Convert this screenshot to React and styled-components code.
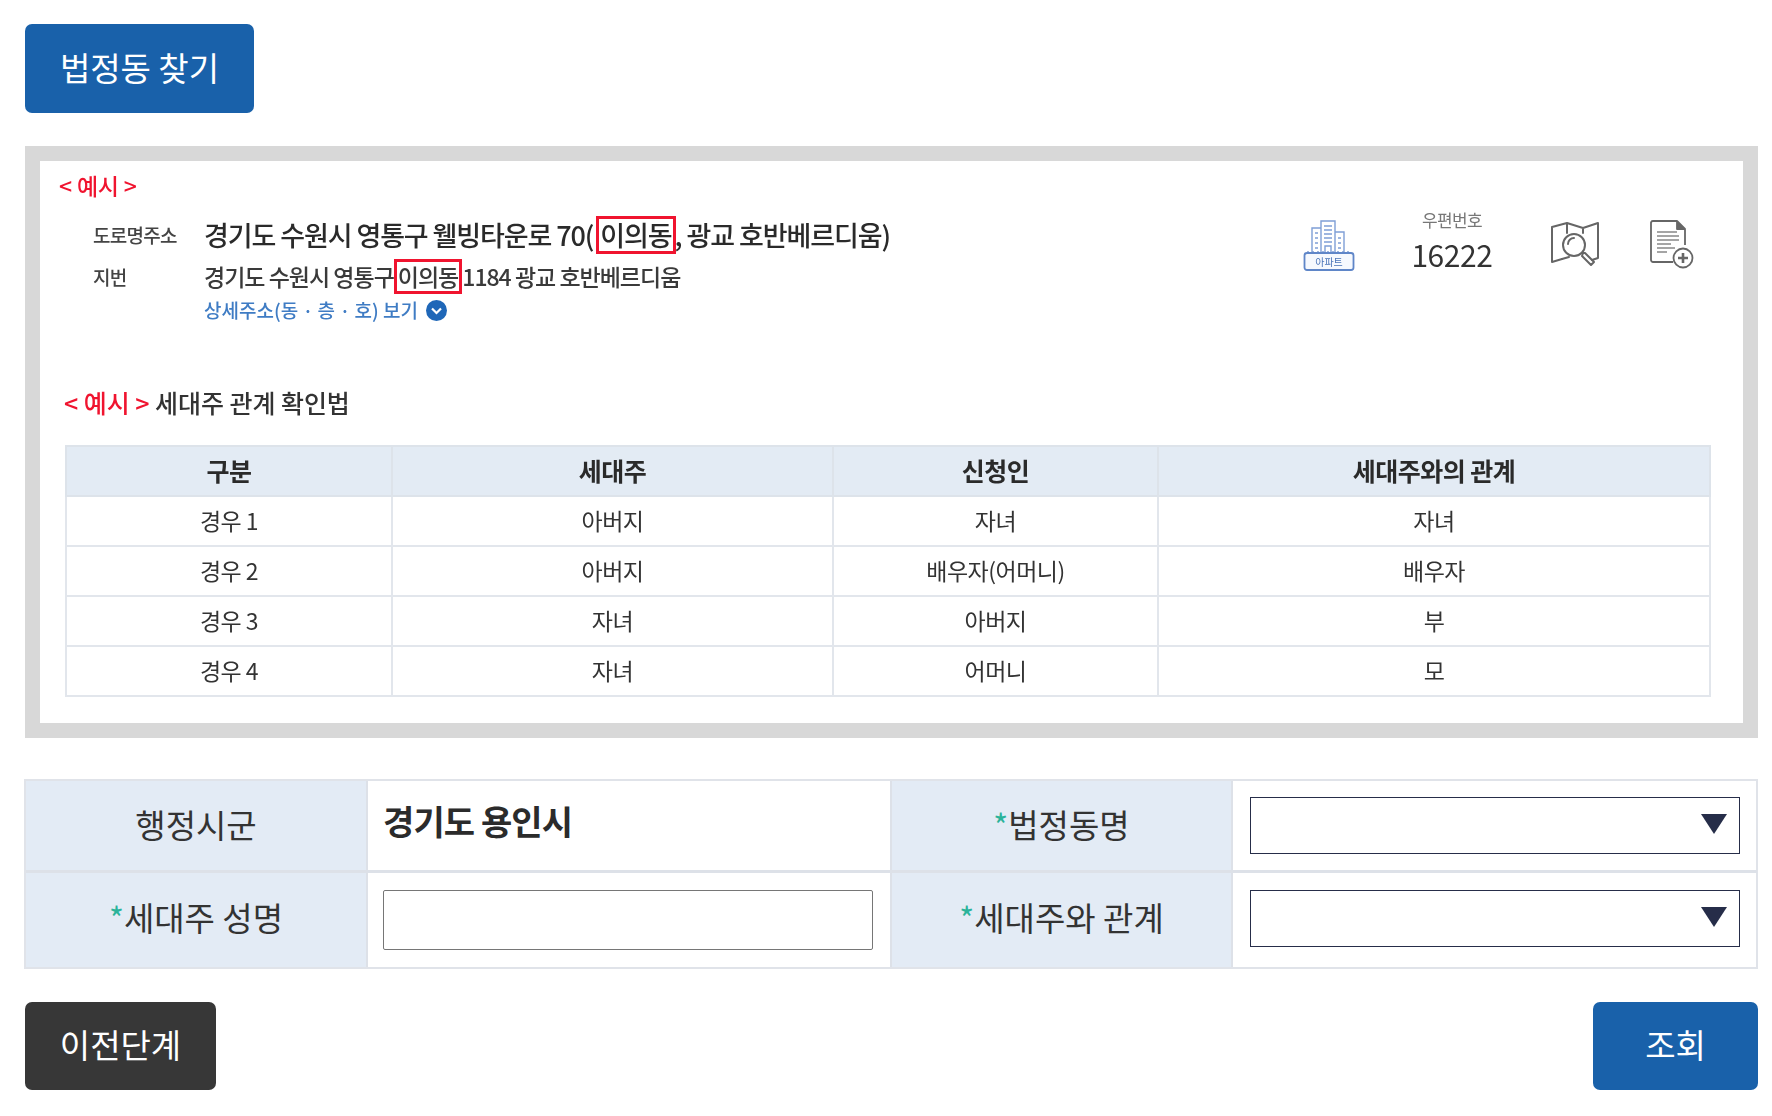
import React from 'react';
import styled, { createGlobalStyle } from 'styled-components';

const Global = createGlobalStyle`
  html, body { margin: 0; padding: 0; background: #fff; }
  body { font-family: "Noto Sans CJK KR", "Noto Sans", sans-serif; color: #333; }
  * { box-sizing: border-box; }
`;

const Page = styled.div`
  width: 1772px;
  padding: 24px 14px 26px 25px;
  display: flex;
  flex-direction: column;
  align-items: stretch;
`;

const Button = styled.button`
  height: ${p => p.$h || 88}px;
  width: ${p => p.$w}px;
  border: 0;
  border-radius: 7px;
  background: ${p => p.$dark ? '#373737' : '#1961aa'};
  color: #fff;
  font: 400 33px/1 "Noto Sans CJK KR", sans-serif;
  padding: 0 0 3px;
`;

const TopRow = styled.div`
  display: flex;
  margin-bottom: 33px;
`;

const Panel = styled.section`
  height: 592px;
  border: 15px solid #d8d8d8;
  background: #fff;
  padding: 9px 29px 0 19px;
  filter: blur(0.45px);
  display: flex;
  flex-direction: column;
`;

const Example = styled.div`
  font-size: 23px;
  line-height: 30px;
  font-weight: 500;
  letter-spacing: -0.2px;
  color: #f0142f;
`;

const AddressRow = styled.div`
  display: flex;
  justify-content: space-between;
  align-items: flex-start;
  margin-top: 13px;
  padding-left: 34px;
  margin-right: 20px;
`;

const AddressGrid = styled.div`
  display: grid;
  grid-template-columns: 111px auto;
`;

const AddrLabel = styled.div`
  font-size: 19px;
  font-weight: 500;
  letter-spacing: -0.7px;
  line-height: ${p => p.$lh}px;
  color: #444;
`;

const RoadText = styled.div`
  font-size: 27px;
  font-weight: 500;
  letter-spacing: -1.1px;
  line-height: 44px;
  color: #2a2a2a;
  white-space: nowrap;
`;

const JibunText = styled.div`
  font-size: 23px;
  font-weight: 500;
  letter-spacing: -1px;
  line-height: 39px;
  color: #3a3a3a;
  white-space: nowrap;
`;

const Marked = styled.span`
  display: inline-block;
  border: 3px solid #f0142f;
  line-height: ${p => p.$lh}px;
  margin: -4px ${p => p.$mr || 0}px -4px ${p => p.$ml || 0}px;
  padding: 0 1px;
  vertical-align: baseline;
`;

const Detail = styled.div`
  grid-column: 2;
  display: flex;
  align-items: center;
  gap: 8px;
  font-size: 19px;
  font-weight: 500;
  line-height: 28px;
  color: #3f7cc4;
`;

const Tools = styled.div`
  display: flex;
  align-items: flex-start;
  padding-top: 7px;
`;

const Postal = styled.div`
  width: 100px;
  margin: -12px 48px 0 47px;
  text-align: center;
`;

const PostalLabel = styled.div`
  font-size: 17px;
  line-height: 24px;
  letter-spacing: -0.6px;
  color: #777;
`;

const PostalNum = styled.div`
  font-size: 30px;
  line-height: 38px;
  letter-spacing: -0.4px;
  color: #333;
  margin-top: 3px;
`;

const ToolIcon = styled.svg`
  display: block;
  flex: none;
  margin-left: ${p => p.$ml || 0}px;
`;

const SectionTitle = styled.div`
  margin: 61px 0 0 5px;
  font-size: 25px;
  line-height: 34px;
  font-weight: 500;
  letter-spacing: -0.05px;
  color: #333;
`;

const RedText = styled.span`
  color: #f0142f;
`;

const GuideTable = styled.table`
  margin: 26px 0 0 6px;
  width: 1646px;
  table-layout: fixed;
  border-collapse: collapse;
  border: 2px solid #e2e6ec;
`;

const GuideHead = styled.th`
  height: 50px;
  padding: 0 0 3px;
  background: #e3ebf4;
  border: 2px solid #dde3ea;
  font-size: 25px;
  font-weight: 700;
  letter-spacing: -0.5px;
  color: #2a2a2a;
`;

const GuideCell = styled.td`
  height: 50px;
  padding: 0 0 3px;
  text-align: center;
  border: 2px solid #e2e6ec;
  font-size: 23px;
  letter-spacing: -0.5px;
  color: #333;
`;

const FormTable = styled.div`
  margin: 41px 0 0 -1px;
  display: grid;
  grid-template-columns: 342px 522px 343px 1fr;
  grid-template-rows: 89px 97px;
  border: 2px solid #e0e3e9;
`;

const FormLabel = styled.div`
  background: #e3ebf5;
  display: flex;
  align-items: center;
  justify-content: center;
  font-size: 33px;
  color: #333;
  border-right: 2px solid #dde1e8;
  border-left: ${p => p.$inner ? '2px solid #dde1e8' : '0'};
  border-top: ${p => p.$second ? '3px solid #dde1e8' : '0'};
  padding-bottom: ${p => p.$second ? 6 : 3}px;
`;

const Star = styled.span`
  color: #2bb39a;
  font-size: 32px;
`;

const FormValue = styled.div`
  display: flex;
  align-items: ${p => p.$top ? 'flex-start' : 'center'};
  padding: ${p => p.$top ? '16px 17px 0' : '0 17px'};
  border-top: ${p => p.$second ? '3px solid #dde1e8' : '0'};
`;

const Strong = styled.div`
  font-size: 34px;
  font-weight: 700;
  line-height: 48px;
  letter-spacing: -0.9px;
  margin-left: -2px;
  color: #2b2b2b;
`;

const TextField = styled.input`
  width: 491px;
  height: 60px;
  margin-left: -2px;
  border: 1px solid #767676;
  border-radius: 2px;
  background: #fff;
`;

const SelectWrap = styled.div`
  position: relative;
  width: 490px;
  height: 57px;
  margin-bottom: ${p => p.$lift}px;
  &::after {
    content: '';
    position: absolute;
    right: 13px;
    top: 17px;
    border-left: 13px solid transparent;
    border-right: 13px solid transparent;
    border-top: 20px solid #262d49;
  }
`;

const Select = styled.select`
  width: 100%;
  height: 100%;
  appearance: none;
  border: 1.5px solid #262d49;
  border-radius: 0;
  background: #fff;
`;

const Actions = styled.div`
  display: flex;
  justify-content: space-between;
  margin-top: 33px;
`;

const ApartmentIcon = () => (
  <ToolIcon width="52" height="52" viewBox="0 0 52 52" fill="none" stroke="#7f9fd6" strokeWidth="1.4">
    <path d="M18 33V1h14v32M18 8H9v25M32 12h9v21" />
    <path d="M21 6h8M21 10h8M21 14h8M21 18h8M21 22h8M12 13h3M12 18h3M12 23h3M12 28h3M35 18h3M35 23h3M35 28h3" />
    <path d="M22 33v-7h6v7" />
    <path d="M4 32h44" strokeDasharray="2 3" />
    <rect x="1.5" y="33" width="49" height="17" rx="2.5" stroke="#5f86c8" strokeWidth="1.8" fill="#f6f9fe" />
    <text x="26" y="45.500" textAnchor="middle" fontSize="10" fill="#4a74b8" stroke="none" fontFamily="Noto Sans CJK KR, sans-serif">아파트</text>
  </ToolIcon>
);

const MapIcon = () => (
  <ToolIcon width="50" height="48" viewBox="0 0 50 48" fill="none" stroke="#666" strokeWidth="2" strokeLinejoin="round" strokeLinecap="round">
    <path d="M17 3 2 7v35l10-3M17 3l16 5 15-5v35l-6 2M17 3v10M33 8v5" />
    <circle cx="24" cy="25" r="11" />
    <path d="M18 24a6 6 0 0 1 6-6" />
    <path d="M33 33l2 0 9 9-3 3-9-9z" />
    <path d="M12 39l7-2" />
  </ToolIcon>
);

const DocIcon = () => (
  <ToolIcon $ml={50} width="44" height="50" viewBox="0 0 44 50" fill="none" stroke="#666" strokeWidth="1.8" strokeLinejoin="round">
    <path d="M23 42H3a2 2 0 0 1-2-2V2.500a2 2 0 0 1 2-1.500h24l8 8v16" />
    <path d="M27 1v8h8" fill="#666" />
    <path d="M7 12h20M7 16h22M7 20h22M7 24h14M7 28h18M7 32h10" strokeWidth="1.5" stroke="#888" />
    <circle cx="33" cy="38" r="9.500" fill="#fff" />
    <path d="M28 38h10M33 33v10" strokeWidth="2.600" />
  </ToolIcon>
);

const ChevronBadge = () => (
  <svg width="21" height="21" viewBox="0 0 21 21">
    <circle cx="10.500" cy="10.500" r="10.500" fill="#1f67b8" />
    <path d="M6 8.500l4.500 4.500L15 8.500" fill="none" stroke="#fff" strokeWidth="2.200" />
  </svg>
);

const rows = [
  ['경우 1', '아버지', '자녀', '자녀'],
  ['경우 2', '아버지', '배우자(어머니)', '배우자'],
  ['경우 3', '자녀', '아버지', '부'],
  ['경우 4', '자녀', '어머니', '모'],
];

export default function App() {
  return (
    <Page>
      <Global />
      <TopRow>
        <Button $w={229} $h={89}>법정동 찾기</Button>
      </TopRow>
      <Panel>
        <Example>&lt; 예시 &gt;</Example>
        <AddressRow>
          <AddressGrid>
            <AddrLabel $lh={44}>도로명주소</AddrLabel>
            <RoadText>경기도 수원시 영통구 웰빙타운로 70(<Marked $lh={32} $ml={3} $mr={-1}>이의동</Marked>, 광교 호반베르디움)</RoadText>
            <AddrLabel $lh={39}>지번</AddrLabel>
            <JibunText>경기도 수원시 영통구<Marked $lh={29}>이의동</Marked>1184 광교 호반베르디움</JibunText>
            <Detail>상세주소(동 · 층 · 호) 보기 <ChevronBadge /></Detail>
          </AddressGrid>
          <Tools>
            <ApartmentIcon />
            <Postal>
              <PostalLabel>우편번호</PostalLabel>
              <PostalNum>16222</PostalNum>
            </Postal>
            <MapIcon />
            <DocIcon />
          </Tools>
        </AddressRow>
        <SectionTitle><RedText>&lt; 예시 &gt;</RedText> 세대주 관계 확인법</SectionTitle>
        <GuideTable>
          <colgroup>
            <col style={{ width: 326 }} />
            <col style={{ width: 441 }} />
            <col style={{ width: 325 }} />
            <col />
          </colgroup>
          <thead>
            <tr>
              <GuideHead>구분</GuideHead>
              <GuideHead>세대주</GuideHead>
              <GuideHead>신청인</GuideHead>
              <GuideHead>세대주와의 관계</GuideHead>
            </tr>
          </thead>
          <tbody>
            {rows.map(r => (
              <tr key={r[0]}>
                {r.map((c, i) => <GuideCell key={i}>{c}</GuideCell>)}
              </tr>
            ))}
          </tbody>
        </GuideTable>
      </Panel>
      <FormTable>
        <FormLabel>행정시군</FormLabel>
        <FormValue $top><Strong>경기도 용인시</Strong></FormValue>
        <FormLabel $inner><span><Star>*</Star>법정동명</span></FormLabel>
        <FormValue><SelectWrap $lift={1}><Select aria-label="법정동명" /></SelectWrap></FormValue>
        <FormLabel $second><span><Star>*</Star>세대주 성명</span></FormLabel>
        <FormValue $second><TextField aria-label="세대주 성명" /></FormValue>
        <FormLabel $inner $second><span><Star>*</Star>세대주와 관계</span></FormLabel>
        <FormValue $second><SelectWrap $lift={4}><Select aria-label="세대주와 관계" /></SelectWrap></FormValue>
      </FormTable>
      <Actions>
        <Button $w={191} $dark>이전단계</Button>
        <Button $w={165}>조회</Button>
      </Actions>
    </Page>
  );
}
